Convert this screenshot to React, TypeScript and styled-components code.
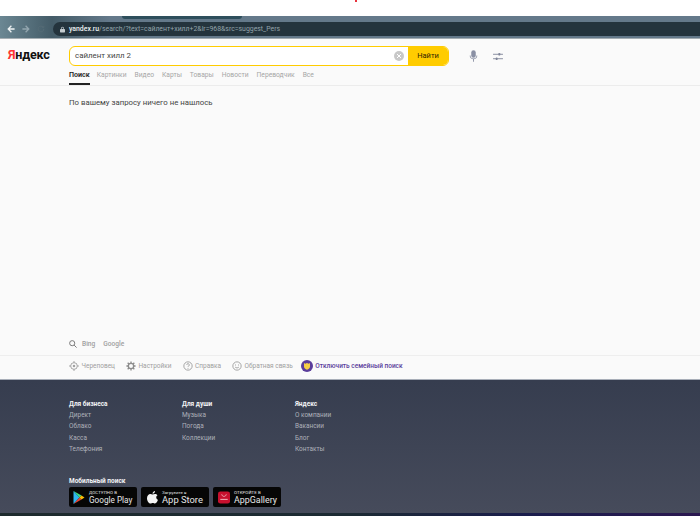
import React from "react";
import styled, { createGlobalStyle } from "styled-components";

const Global = createGlobalStyle`
  html, body { margin: 0; padding: 0; background: #fff; }
  body { font-family: "Roboto", "Liberation Sans", sans-serif; }
`;
const Page = styled.div`
  width: 700px; height: 516px; overflow: hidden; display: flex; flex-direction: column;
`;
const TopBlank = styled.div`
  height: 16px; background: #fff; flex: none; position: relative;
`;
const RedDot = styled.span`
  position: absolute; left: 355px; top: 0; width: 2px; height: 2px; background: #e8323c;
`;
const Chrome = styled.div`
  height: 23px; flex: none; display: flex; align-items: flex-start; position: relative;
  box-sizing: border-box; padding: 6px 0 0 7px;
  background: linear-gradient(90deg, #6b8793, #445c68 52px, #64798a 110px, #64798a);
  border-bottom: 1px solid #a4adb2;
`;
const ChromeTab = styled.div`
  position: absolute; left: 122px; top: 0; width: 120px; height: 3px; background: #2e4f5c; border-radius: 0 0 3px 3px;
`;
const NavIcons = styled.div`
  display: flex; gap: 7px; align-items: center; width: 46px; height: 14px; flex: none;
`;
const UrlBar = styled.div`
  flex: 1; height: 14px; background: #24343d; border-radius: 7px 0 0 7px;
  display: flex; align-items: center; padding-left: 7px; gap: 4px;
  font-size: 6.9px; color: #93a3aa; white-space: nowrap;
`;
const Host = styled.span`color: #eef2f3; font-weight: 500;`;
const HeaderRow = styled.div`
  flex: none; height: 30px; background: #fafafa; display: flex; align-items: flex-start; padding: 7px 0 0 8px;
  box-sizing: border-box;
`;
const Logo = styled.div`
  width: 61px; font: 700 12.6px "Roboto", sans-serif; color: #111; padding-top: 1px; letter-spacing: -0.2px;
  span { color: #f33; }
`;
const SearchBox = styled.div`
  width: 380px; height: 20px; box-sizing: border-box; border: 1px solid #fc0; border-radius: 6px; display: flex; overflow: hidden; background: #fff; flex: none;
`;
const Query = styled.div`
  flex: 1; font-size: 7.9px; color: #444; padding-left: 5px; line-height: 18px;
`;
const ClearBtn = styled.div`
  width: 14px; display: flex; align-items: center;
`;
const FindBtn = styled.div`
  width: 40px; background: #fc0; color: #302500; font-size: 7.5px; text-align: center; line-height: 18px;
`;
const ToolIcons = styled.div`
  display: flex; gap: 15px; margin-left: 20px; margin-top: 4px; align-items: center;
`;
const Tabs = styled.div`
  flex: none; height: 16px; background: #fafafa; border-bottom: 1px solid #ececec;
  padding-left: 69px; display: flex;
`;
const Tab = styled.div<{ $active?: boolean }>`
  font-size: ${p => (p.$active ? "7.1px" : "6.7px")}; color: ${p => (p.$active ? "#222" : "#a6a6a6")}; font-weight: ${p => (p.$active ? 600 : 400)};
  height: 16px; line-height: 12px; box-sizing: border-box; margin-right: ${p => (p.$active ? 7 : 8)}px; white-space: nowrap;
  border-bottom: ${p => (p.$active ? "2px solid #222" : "none")};
`;
const Main = styled.div`
  flex: 1; background: #fafafa; display: flex; flex-direction: column; padding-left: 69px; min-height: 0;
`;
const Message = styled.div`
  margin-top: 12px; font-size: 7.8px; line-height: 10px; color: #444; flex: 1;
`;
const Engines = styled.div`
  display: flex; align-items: center; gap: 8px; font-size: 6.6px; color: #a0a0a0; height: 22px; padding-top: 1px; font-weight: 500;
`;
const EngineIcon = styled.svg`margin-right: -3px;`;
const Bottom = styled.div`
  flex: none; height: 25px; box-sizing: border-box; background: #fafafa; border-top: 1px solid #eee; border-bottom: 1px solid #a8aeb8;
  display: flex; align-items: center; padding: 0 0 3px 69px; gap: 11px; font-size: 6.5px; color: #a0a0a0;
`;
const BottomItem = styled.div`display: flex; align-items: center; gap: 2.5px; white-space: nowrap;`;
const Family = styled(BottomItem)`color: #5b3d9b; font-weight: 500; margin-left: -3px;`;
const Footer = styled.div`
  flex: none; height: 136px; display: flex; flex-direction: column; color: #fff;
`;
const FooterBody = styled.div`
  flex: 1; padding: 19px 0 0 69px; box-sizing: border-box;
  background: linear-gradient(#363d4f, #464b5b);
`;
const Cols = styled.div`display: grid; grid-template-columns: 113px 113px 113px; width: 339px;`;
const Col = styled.div`display: flex; flex-direction: column; height: 57px;`;
const ColHead = styled.div`font-size: 6.5px; font-weight: 700; color: #f2f3f5; height: 11px; line-height: 10px;`;
const ColLink = styled.div`font-size: 6.45px; color: #aeb1ba; height: 11.4px; line-height: 11px;`;
const MobileHead = styled.div`font-size: 6.5px; font-weight: 700; color: #f2f3f5; margin-top: 20px; line-height: 10px;`;
const Stores = styled.div`display: flex; gap: 4px; margin-top: 1px;`;
const Store = styled.div<{ $pad: number }>`
  width: 68px; height: 20px; background: #060606; border-radius: 2px; display: flex; align-items: center; gap: 4px; padding-left: ${p => p.$pad}px; box-sizing: border-box;
`;
const StoreText = styled.div`display: flex; flex-direction: column; color: #e8e8e8; white-space: nowrap;`;
const StoreSmall = styled.span`font-size: 4.3px; line-height: 5px; letter-spacing: .1px;`;
const StoreBig = styled.span<{ $size: number }>`font-size: ${p => p.$size}px; line-height: 10px; font-weight: 400;`;
const Strip = styled.div`
  flex: none; height: 3px; background: linear-gradient(90deg, #1d2a2d 0, #1c2a33 50%, #1a1d4c 75%, #2b1850 100%);
`;

const Arrow = ({ dir, color }: { dir: "l" | "r"; color: string }) => (
  <svg width="8" height="8" viewBox="0 0 10 10" fill="none" stroke={color} strokeWidth="1.6">
    <path d={dir === "l" ? "M9.500 5H1.500M5.500 1 1.500 5l4 4" : "M.5 5h8M4.500 1l4 4-4 4"} />
  </svg>
);
const Circ = ({ children }: { children: React.ReactNode }) => (
  <svg width="10" height="10" viewBox="0 0 12 12" fill="none" stroke="#8c8c8c" strokeWidth="0.9">{children}</svg>
);

export default function App() {
  return (
    <Page>
      <Global />
      <TopBlank><RedDot /></TopBlank>
      <Chrome>
        <ChromeTab />
        <NavIcons>
          <Arrow dir="l" color="#eef2f3" />
          <Arrow dir="r" color="#93a6af" />
          <svg width="8" height="8" viewBox="0 0 10 10" fill="none" stroke="#566c76" strokeWidth="1.200"><path d="M8.500 5a3.500 3.500 0 1 1-1-2.500M8.500 1v2h-2" /></svg>
        </NavIcons>
        <UrlBar>
          <svg width="5" height="7" viewBox="0 0 6 7" fill="#c4ccd0"><rect y="3" width="6" height="4" rx=".7" /><path d="M1.200 3V2a1.800 1.800 0 0 1 3.600 0v1h-.8V2a1 1 0 0 0-2 0v1z" /></svg>
          <span><Host>yandex.ru</Host>/search/?text=сайлент+хилл+2&amp;lr=968&amp;src=suggest_Pers</span>
        </UrlBar>
      </Chrome>
      <HeaderRow>
        <Logo><span>Я</span>ндекс</Logo>
        <SearchBox>
          <Query>сайлент хилл 2</Query>
          <ClearBtn>
            <svg width="10" height="10" viewBox="0 0 10 10"><circle cx="5" cy="5" r="5" fill="#c8c8c8" /><path d="M3 3l4 4M7 3 3 7" stroke="#fff" strokeWidth="1" /></svg>
          </ClearBtn>
          <FindBtn>Найти</FindBtn>
        </SearchBox>
        <ToolIcons>
          <svg width="9" height="12" viewBox="0 0 10 13" fill="#8a90a4"><rect x="2.500" y="0" width="5" height="8.500" rx="2.500" /><path d="M.8 6h.9a3.300 3.300 0 0 0 6.600 0h.9a4.200 4.200 0 0 1-3.700 4.100V13H4.500v-2.900A4.200 4.200 0 0 1 .8 6z" /></svg>
          <svg width="10" height="9" viewBox="0 0 11 10" fill="#7e8498"><rect y="2" width="11" height="1" /><rect y="7" width="11" height="1" /><rect x="6" y="1" width="2" height="3" rx=".8" /><rect x="3" y="6" width="2" height="3" rx=".8" /></svg>
        </ToolIcons>
      </HeaderRow>
      <Tabs>
        {["Поиск", "Картинки", "Видео", "Карты", "Товары", "Новости", "Переводчик", "Все"].map((t, i) => (
          <Tab key={t} $active={i === 0}>{t}</Tab>
        ))}
      </Tabs>
      <Main>
        <Message>По вашему запросу ничего не нашлось</Message>
        <Engines>
          <EngineIcon width="8" height="8" viewBox="0 0 10 10" fill="none" stroke="#777" strokeWidth="1.200"><circle cx="4" cy="4" r="3.200" /><path d="M6.400 6.400 9.500 9.500" /></EngineIcon>
          <span>Bing</span>
          <span>Google</span>
        </Engines>
      </Main>
      <Bottom>
        <BottomItem>
          <Circ><circle cx="6" cy="6" r="4" /><circle cx="6" cy="6" r="1" fill="#8c8c8c" /><path d="M6 0v2M6 10v2M0 6h2M10 6h2" /></Circ>
          Череповец
        </BottomItem>
        <BottomItem>
          <Circ><circle cx="6" cy="6" r="3.200" strokeWidth="1.600" /><path strokeWidth="1.600" d="M6 .5v2M6 9.500v2M.5 6h2M9.500 6h2M2 2l1.500 1.500M8.500 8.500 10 10M2 10l1.500-1.500M8.500 3.500 10 2" /></Circ>
          Настройки
        </BottomItem>
        <BottomItem>
          <Circ><circle cx="6" cy="6" r="5" /><path d="M4.500 4.700a1.500 1.500 0 1 1 2.200 1.300c-.5.300-.7.600-.7 1.200M6 8.300v1" /></Circ>
          Справка
        </BottomItem>
        <BottomItem>
          <Circ><circle cx="6" cy="6" r="5" /><path d="M3.800 7.300c1.200 1.300 3.200 1.300 4.400 0M4.200 4.200v1.200M7.800 4.200v1.200" /></Circ>
          Обратная связь
        </BottomItem>
        <Family>
          <svg width="12" height="12" viewBox="0 0 12 12"><circle cx="6" cy="6" r="6" fill="#5b3d9b" /><path d="M3 3l1.300.8L6 3l1.700.8L9 3v3.500c0 1.700-1.500 2.800-3 3.200-1.500-.4-3-1.500-3-3.200z" fill="#f6cf45" /></svg>
          Отключить семейный поиск
        </Family>
      </Bottom>
      <Footer>
        <FooterBody>
          <Cols>
            <Col>
              <ColHead>Для бизнеса</ColHead>
              <ColLink>Директ</ColLink><ColLink>Облако</ColLink><ColLink>Касса</ColLink><ColLink>Телефония</ColLink>
            </Col>
            <Col>
              <ColHead>Для души</ColHead>
              <ColLink>Музыка</ColLink><ColLink>Погода</ColLink><ColLink>Коллекции</ColLink>
            </Col>
            <Col>
              <ColHead>Яндекс</ColHead>
              <ColLink>О компании</ColLink><ColLink>Вакансии</ColLink><ColLink>Блог</ColLink><ColLink>Контакты</ColLink>
            </Col>
          </Cols>
          <MobileHead>Мобильный поиск</MobileHead>
          <Stores>
            <Store $pad={4}>
              <svg width="12" height="13" viewBox="0 0 11 13"><path d="M0 0v13l6-6.500z" fill="#2fb5f0" /><path d="M0 0l6 6.500 2-2z" fill="#3ddc84" /><path d="M0 13l6-6.500 2 2z" fill="#ea4335" /><path d="M8 4.500 11 6.500 8 8.500 6 6.500z" fill="#fbbc04" /></svg>
              <StoreText><StoreSmall>ДОСТУПНО В</StoreSmall><StoreBig $size={8.2}>Google Play</StoreBig></StoreText>
            </Store>
            <Store $pad={6}>
              <svg width="11" height="13" viewBox="0 0 11 13" fill="#f4f4f4"><path d="M8 0c0 1.500-1 2.800-2.500 2.800C5.500 1.300 6.700.2 8 0zM5.500 3.500c.8 0 1.500-.5 2.500-.5 1 0 1.900.5 2.500 1.300-1.900 1.200-1.500 3.800.5 4.500-.6 1.500-1.600 3.700-3 3.700-.8 0-1.200-.5-2.200-.5s-1.500.5-2.200.5C1.500 12.500 0 9.500 0 7.200 0 4.700 1.600 3 3.400 3c.8 0 1.500.5 2.100.5z" /></svg>
              <StoreText><StoreSmall>Загрузите в</StoreSmall><StoreBig $size={9.4}>App Store</StoreBig></StoreText>
            </Store>
            <Store $pad={5}>
              <svg width="12" height="13" viewBox="0 0 13 13"><rect width="13" height="13" rx="2.500" fill="#c8102e" /><path d="M4 3c.3 1.500 1.200 2.300 2.500 2.300S8.700 4.500 9 3" stroke="#fff" strokeWidth=".6" fill="none" /><rect x="2.500" y="8" width="8" height="1" fill="#f6c0c8" /></svg>
              <StoreText><StoreSmall>ОТКРОЙТЕ В</StoreSmall><StoreBig $size={8.9}>AppGallery</StoreBig></StoreText>
            </Store>
          </Stores>
        </FooterBody>
        <Strip />
      </Footer>
    </Page>
  );
}
